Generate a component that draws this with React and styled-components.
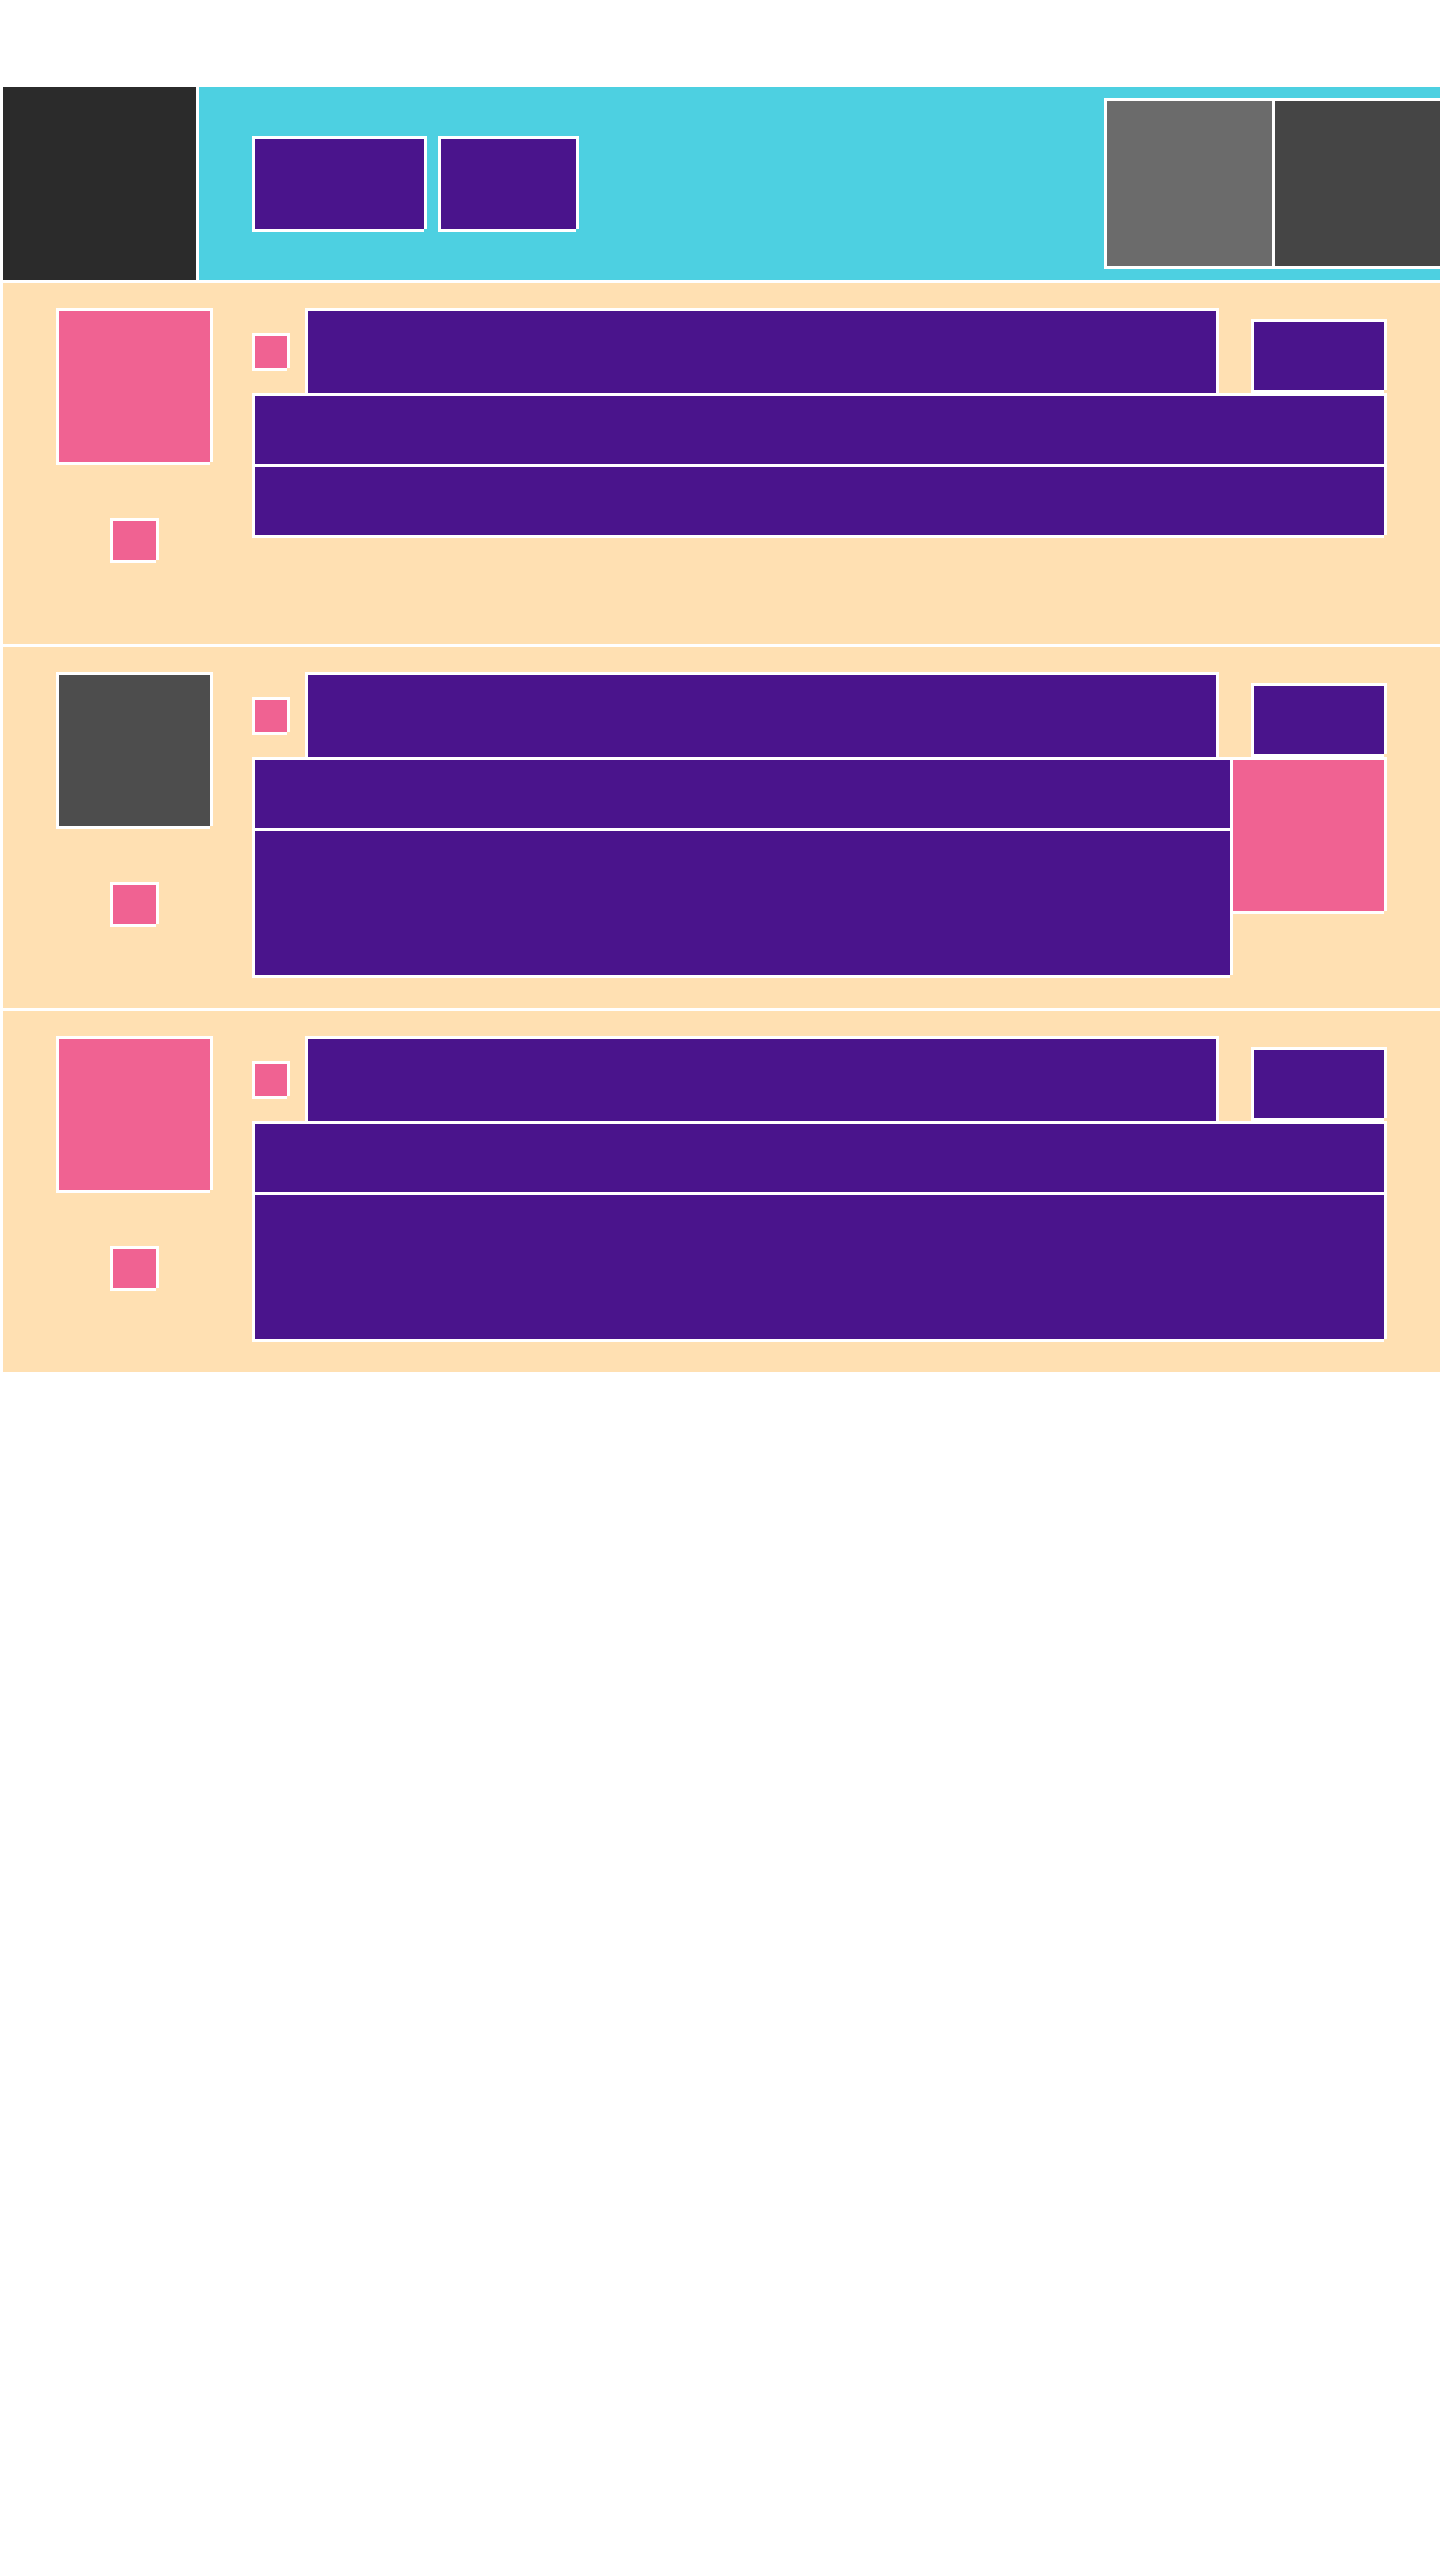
import React from 'react'
import styled, { createGlobalStyle, css } from 'styled-components'

const GlobalStyle = createGlobalStyle`
	html,
	body {
		margin: 0;
		padding: 0;
		background: #fff;
	}
	body {
		font-family: 'Liberation Sans', Arial, sans-serif;
	}
	* {
		box-sizing: border-box;
	}
`

// white frame: top/left border + right/bottom shadow (leaves the corner open)
const framed = css`
	border-top: 3px solid #fff;
	border-left: 3px solid #fff;
	box-shadow: 3px 0 0 #fff, 0 3px 0 #fff;
`

const colors = {
	dark: '#2b2b2b',
	cyan: '#4dd0e1',
	purple: '#4a148c',
	pink: '#f06292',
	peach: '#ffe0b2',
	grey: '#6b6b6b',
	greyDark: '#454545',
	avatarGrey: '#4d4d4d',
}

const Page = styled.div`
	width: 1440px;
	padding-top: 84px;
	overflow: hidden;
`

const Header = styled.header`
	display: flex;
	height: 196px;
`

const Brand = styled.div`
	${framed}
	width: 196px;
	flex-shrink: 0;
	background: ${colors.dark};
`

const Toolbar = styled.div`
	${framed}
	flex: 1;
	display: flex;
	align-items: center;
	justify-content: space-between;
	padding: 0 0 3px 53px;
	background: ${colors.cyan};
`

const Nav = styled.nav`
	display: flex;
	gap: 14px;
`

const NavButton = styled.div`
	${framed}
	width: ${p => p.$w}px;
	height: 93px;
	background: ${colors.purple};
`

const Tiles = styled.div`
	display: flex;
`

const Tile = styled.div`
	${framed}
	width: 168px;
	height: 168px;
	background: ${p => p.$bg};
`

const List = styled.div`
	display: grid;
	grid-auto-rows: 1fr;
`

const Row = styled.section`
	${framed}
	display: flex;
	padding: 25px 56px 33px 25px;
	background: ${colors.peach};
`

const Aside = styled.div`
	width: 210px;
	flex-shrink: 0;
	margin-right: 14px;
	display: flex;
	flex-direction: column;
	align-items: center;
`

const Avatar = styled.div`
	${framed}
	width: 154px;
	height: 154px;
	background: ${p => p.$bg};
`

const Badge = styled.div`
	${framed}
	width: 46px;
	height: 42px;
	margin-top: 56px;
	background: ${colors.pink};
`

const Main = styled.div`
	flex: 1;
	display: flex;
	flex-direction: column;
`

const TitleLine = styled.div`
	display: flex;
	align-items: flex-start;
	height: 85px;
`

const Dot = styled.div`
	${framed}
	width: 35px;
	height: 35px;
	align-self: center;
	margin-right: 18px;
	background: ${colors.pink};
`

const Title = styled.div`
	${framed}
	flex: 1;
	height: 85px;
	margin-right: 35px;
	background: ${colors.purple};
`

const Action = styled.div`
	${framed}
	width: 133px;
	height: 71px;
	margin-top: 11px;
	background: ${colors.purple};
`

const Body = styled.div`
	display: flex;
`

const Bars = styled.div`
	flex: 1;
	display: flex;
	flex-direction: column;
`

const Bar = styled.div`
	${framed}
	height: ${p => (p.$tall ? 147 : 71)}px;
	background: ${colors.purple};
`

const Media = styled.div`
	${framed}
	width: 154px;
	height: 154px;
	flex-shrink: 0;
	background: ${colors.pink};
`

const posts = [
	{ id: 1, avatar: colors.pink, media: false, tall: false },
	{ id: 2, avatar: colors.avatarGrey, media: true, tall: true },
	{ id: 3, avatar: colors.pink, media: false, tall: true },
]

const App = () => {
	return (
		<>
			<GlobalStyle />
			<Page>
				<Header>
					<Brand />
					<Toolbar>
						<Nav>
							<NavButton $w={172} />
							<NavButton $w={138} />
						</Nav>
						<Tiles>
							<Tile $bg={colors.grey} />
							<Tile $bg={colors.greyDark} />
						</Tiles>
					</Toolbar>
				</Header>
				<List>
					{posts.map(post => (
						<Row key={post.id}>
							<Aside>
								<Avatar $bg={post.avatar} />
								<Badge />
							</Aside>
							<Main>
								<TitleLine>
									<Dot />
									<Title />
									<Action />
								</TitleLine>
								<Body>
									<Bars>
										<Bar />
										<Bar $tall={post.tall} />
									</Bars>
									{post.media && <Media />}
								</Body>
							</Main>
						</Row>
					))}
				</List>
			</Page>
		</>
	)
}

export default App
